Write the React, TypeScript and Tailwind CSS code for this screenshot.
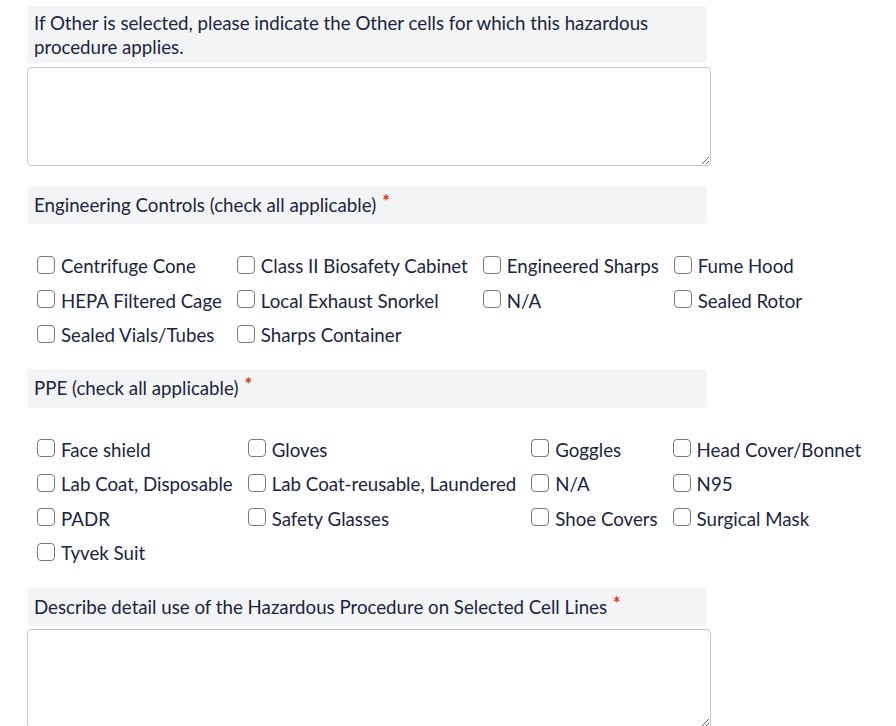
const engineering = [
  'Centrifuge Cone',
  'Class II Biosafety Cabinet',
  'Engineered Sharps',
  'Fume Hood',
  'HEPA Filtered Cage',
  'Local Exhaust Snorkel',
  'N/A',
  'Sealed Rotor',
  'Sealed Vials/Tubes',
  'Sharps Container',
]

const ppe = [
  'Face shield',
  'Gloves',
  'Goggles',
  'Head Cover/Bonnet',
  'Lab Coat, Disposable',
  'Lab Coat-reusable, Laundered',
  'N/A',
  'N95',
  'PADR',
  'Safety Glasses',
  'Shoe Covers',
  'Surgical Mask',
  'Tyvek Suit',
]

function Label({ text, required, tall }: { text: string; required?: boolean; tall?: boolean }) {
  return (
    <div
      className={
        tall
          ? 'w-[680px] h-[39px] flex items-center bg-[#f3f4f6] rounded-[4px] px-[7px] leading-6'
          : 'w-[680px] h-[38px] flex items-center bg-[#f3f4f6] rounded-[4px] px-[7px] leading-6'
      }
    >
      <span>{text}</span>
      {required && (
        <span className="ml-[6px] text-[#e0301e] text-[18px] leading-none font-bold relative -top-[4px]">*</span>
      )}
    </div>
  )
}

function CheckGrid({ items, name }: { items: string[]; name: string }) {
  return (
    <div className="grid grid-cols-[repeat(4,auto)] justify-start gap-x-[15px] pl-[10px]">
      {items.map(item => (
        <label key={item} className="flex items-center h-[34.5px] cursor-pointer">
          <input
            type="checkbox"
            name={name}
            className="appearance-none w-[18px] h-[18px] border border-[#7a7a7a] rounded-[4px] bg-white -mt-[3px] shrink-0"
          />
          <span className="ml-[6px] whitespace-nowrap">{item}</span>
        </label>
      ))}
    </div>
  )
}

export default function App() {
  return (
    <div
      className="min-h-[726px] bg-white pl-[27px] pt-[6px] text-[18.7px] text-[#1b2440]"
      style={{ fontFamily: 'Lato, "Noto Sans", sans-serif' }}
    >
      <div className="w-[680px] bg-[#f3f4f6] rounded-[4px] px-[7px] pt-[5px] pb-1 leading-6">
        If Other is selected, please indicate the Other cells for which this hazardous procedure
        applies.
      </div>
      <textarea className="block mt-[4px] w-[684px] h-[99px] border border-[#c8c8c8] rounded-[4px] p-2 outline-none" />

      <div className="mt-[20px]">
        <Label text="Engineering Controls (check all applicable)" required />
      </div>
      <div className="mt-[25px]">
        <CheckGrid items={engineering} name="engineering" />
      </div>

      <div className="mt-[16px]">
        <Label text="PPE (check all applicable)" required tall />
      </div>
      <div className="mt-[25px]">
        <CheckGrid items={ppe} name="ppe" />
      </div>

      <div className="mt-[17px]">
        <Label text="Describe detail use of the Hazardous Procedure on Selected Cell Lines" required />
      </div>
      <textarea className="block mt-[3px] w-[684px] h-[99px] border border-[#c8c8c8] rounded-[4px] p-2 outline-none" />
    </div>
  )
}
